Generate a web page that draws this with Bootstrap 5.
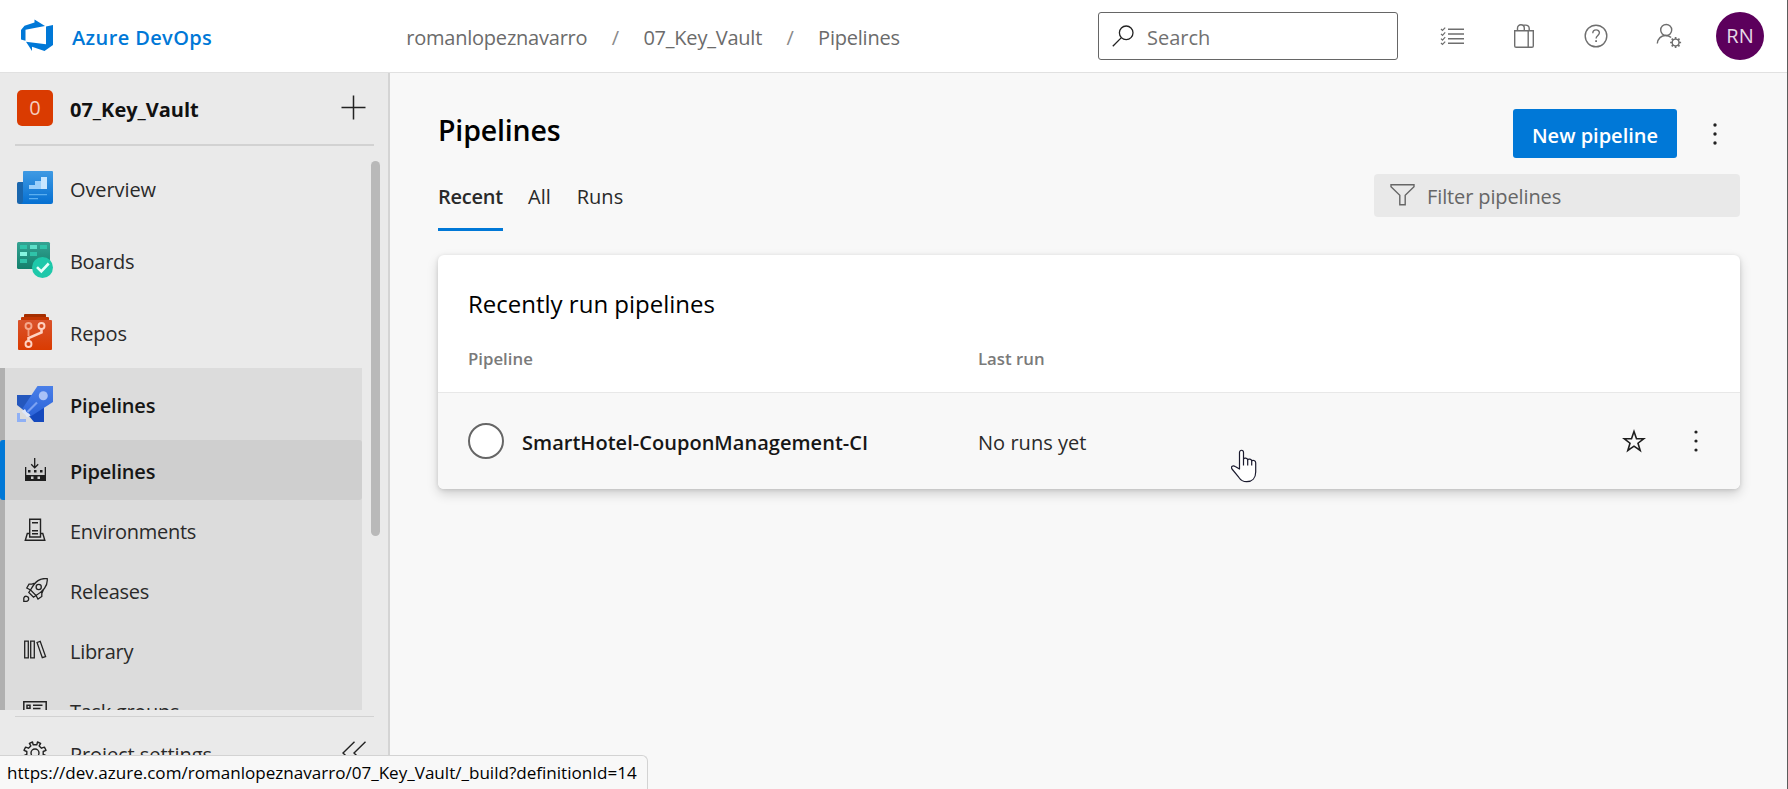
<!DOCTYPE html>
<html lang="en">
<head>
<meta charset="utf-8">
<meta name="viewport" content="width=device-width, initial-scale=1">
<title>Pipelines - Azure DevOps</title>
<link href="https://cdn.jsdelivr.net/npm/bootstrap@5.3.0/dist/css/bootstrap.min.css" rel="stylesheet">
<style>
:root{--az-blue:#0078d7}
body{font-family:"Open Sans","Noto Sans",sans-serif;font-size:20px;line-height:28px;color:#2a2a2a;background:#f8f8f8;height:100vh;overflow:hidden}
svg{display:block;flex:none}
a{color:inherit;text-decoration:none}
.shell{border-right:1px solid #5c5c5c}
.topbar{height:73px;border-bottom:1px solid #e1e1e1;background:#fff;padding:0 23px 0 20px}
.brand-name{color:var(--az-blue);font-weight:600;letter-spacing:.38px;margin-left:18px;padding-top:4px}
.crumbs{color:#6b6b6b;margin-left:194px;padding-top:4px;white-space:nowrap;letter-spacing:-.22px}
.crumb-sep{width:56px;text-align:center;color:#8a8a8a}
.searchbox{width:300px;height:48px;border:1px solid #666;border-radius:3px;color:#717171;padding:3px 12px 0 13px;margin-right:42px}
.searchbox svg{margin:-3px 13px 0 0}
.top-icons{gap:48px;margin-right:34px;color:#6e6e6e}
.avatar{width:48px;height:48px;background:#5c005c;color:#e6d9e6}
.sidebar{width:390px;background:#eaeaea;border-right:2px solid #d4d4d4}
.project-row{height:71px;padding:0 22px 2px 17px}
.project-tile{width:36px;height:36px;border-radius:5px;background:#da3b01;color:#f6cdbf}
.project-name{font-weight:700;margin-left:17px;letter-spacing:0;color:#111;padding-top:4px}
.settings-row{height:71px;padding:1px 22px 0 17px}
.rule{margin:0 14px 0 15px;background:#d2d2d2}
.nav-scroll{height:564px;padding-top:6px;overflow:hidden}
.nav-list{width:362px}
.hub{height:72px;padding-left:17px;letter-spacing:-.1px}
.hub span,.leaf span{padding-top:3px}
.hub svg{margin-right:17px}
.hub-open{background:#dcdcdc;border-left:5px solid #b0b0b0}
.hub-open .hub,.hub-open .leaf{padding-left:12px}
.leaf{height:60px}
.leaf svg{margin:0 23px 0 6px}
.leaf-on{background:#cfcfcf;border-left:5px solid var(--az-blue);border-radius:3px;margin-left:-5px}
.semi{font-weight:600;letter-spacing:-.2px;color:#161616}
.tight{letter-spacing:-.3px}
.thumb{width:9px;height:375px;border-radius:5px;background:#b9b9b9;margin:15px 8px 0 0}
.main-pane{padding:36px 47px 0 48px}
.page-title{font-size:28.5px;font-weight:600;letter-spacing:-.15px;line-height:38px;color:#000;margin:2px 0 2px}
.btn-new{width:164px;height:49px;padding:4px 0 0;border-radius:3px;background:var(--az-blue);border:0;color:#fff;font-size:20px;font-weight:600}
.kebab{width:4px;margin-left:36px;margin-right:23px}
.tabrow{height:58px;margin-top:16px}
.tab-item{margin-right:25px;height:57px;padding-top:9px}
.tab-on{border-bottom:3px solid var(--az-blue);font-weight:600;width:65px;letter-spacing:-.25px}
.tab-all{margin-right:26px}
.filterbox{width:366px;height:43px;border-radius:4px;background:#e9e9e9;color:#666;padding:2px 0 0 16px;letter-spacing:-.12px}
.filterbox svg{margin:-3px 12px 0 0}
.pipe-card{margin-top:23px;border:0;border-radius:6px;overflow:hidden;box-shadow:0 5px 12px rgba(0,0,0,.16),0 1px 4px rgba(0,0,0,.12)}
.card-heading{font-size:24px;line-height:32px;color:#000;margin:33px 0 0 30px;font-weight:400}
.col-head{font-size:16.8px;font-weight:600;color:#7a7a7a;line-height:24px;margin-top:27px;height:45px}
.cell-name{width:510px;flex:none;margin-left:30px}
.pipe-row{height:97px;background:#f8f8f8;border-top:1px solid #e8e8e8}
.pipe-name{letter-spacing:.03px;padding-top:3px}
.run-note{padding-top:3px;letter-spacing:.04px}
.run-ring{width:36px;height:36px;border:2px solid #666;border-radius:50%;background:#fff;margin-right:18px}
.row-kebab{margin:0 42px 0 48px}
.hand{left:1231px;top:449px}
.statusbar{left:0;bottom:0;width:648px;height:34px;background:#f8f8f8;border:1px solid #d3d3d3;border-left:0;border-bottom:0;border-top-right-radius:6px;color:#000;font-size:17.07px;line-height:34px;padding-left:7px;white-space:nowrap}
</style>
</head>
<body>
<div class="shell d-flex flex-column vh-100">
  <header class="topbar d-flex align-items-center flex-shrink-0">
    <svg width="34" height="34" viewBox="0 0 34 34" fill="#0078d7"><path d="M1 11 L4.5 6.8 L14.5 3.5 V0.5 L25 7 L5.5 10.8 V21.8 L1 20.5Z"/><path d="M26 7.5 L33 6 V26 L24.5 32 L12 27.8 V32 L6 22.8 L26 25.2Z"/></svg>
    <a href="#" class="brand-name">Azure DevOps</a>
    <nav class="crumbs d-flex">
      <span>romanlopeznavarro</span><span class="crumb-sep">/</span><span>07_Key_Vault</span><span class="crumb-sep">/</span><span>Pipelines</span>
    </nav>
    <div class="searchbox d-flex align-items-center ms-auto">
      <svg width="22" height="22" viewBox="0 0 22 22" fill="none" stroke="#222" stroke-width="1.3"><circle cx="14.2" cy="7.8" r="6.8"/><path d="M9.4 12.6 .8 21.2"/></svg>
      <span>Search</span>
    </div>
    <div class="top-icons d-flex align-items-center">
      <svg width="24" height="24" viewBox="0 0 24 24" fill="none" stroke="currentColor" stroke-width="1.5"><path d="M8 5.2h16M8 10h16M8 14.8h16M8 19.2h16"/><path stroke-width="1.2" d="M1 5l1.5 1.5L5.2 3.6M1 9.8l1.5 1.5 2.7-2.9M1 14.6l1.5 1.5 2.7-2.900M1 19l1.5 1.5 2.7-2.9"/></svg>
      <svg width="24" height="24" viewBox="0 0 24 24" fill="none" stroke="currentColor" stroke-width="1.4"><path d="M2.700 6.700h18.600v15.200a1.400 1.400 0 0 1-1.400 1.400H4.100a1.400 1.400 0 0 1-1.400-1.400zM16.200 6.700v16.600M5.500 6.700V4.200a3.400 3.400 0 0 1 6.800 0v2.500M9.500 1.100h4.300a3.400 3.400 0 0 1 3.400 3.400v2.200"/></svg>
      <svg width="24" height="24" viewBox="0 0 24 24" fill="none" stroke="currentColor" stroke-width="1.4"><circle cx="12" cy="12" r="10.8"/><path d="M8.800 9.200c0-4.600 6.600-4.200 6.600-.4 0 2.500-3.300 2.800-3.300 5.600"/><path stroke-width="1.8" d="M12.100 16.200v1.900"/></svg>
      <svg width="26" height="26" viewBox="0 0 26 26" fill="none" stroke="currentColor" stroke-width="1.4"><circle cx="10.200" cy="7" r="5.500"/><path d="M1.300 20.500c.4-5 4-8 8.300-8 2.400 0 4.200.8 5.500 2"/><circle cx="19.600" cy="19.500" r="3.400"/><path stroke-width="1.700" d="M19.600 14v2.100M19.600 22.900V25M14.100 19.500h2.100M23 19.500h2.100M15.700 15.600l1.500 1.500M22 21.900l1.500 1.500M23.500 15.600 22 17.100M17.200 21.900l-1.500 1.500"/></svg>
    </div>
    <div class="avatar rounded-circle d-flex align-items-center justify-content-center">RN</div>
  </header>

  <div class="d-flex flex-grow-1 overflow-hidden">
    <aside class="sidebar flex-shrink-0">
      <div class="project-row d-flex align-items-center">
        <div class="project-tile d-flex align-items-center justify-content-center">0</div>
        <span class="project-name">07_Key_Vault</span>
        <svg class="ms-auto" width="25" height="25" viewBox="0 0 25 25" stroke="#222" stroke-width="1.5"><path d="M12.500 .5v24M.5 12.500h24"/></svg>
      </div>
      <div class="rule" style="height:2px"></div>
      <div class="d-flex justify-content-between">
        <nav class="nav-scroll">
          <div class="nav-list">
            <a href="#" class="hub d-flex align-items-center">
              <svg width="36" height="36" viewBox="0 0 36 36"><defs><linearGradient id="ov" x1="0" y1="0" x2="0" y2="1"><stop stop-color="#3f9ae3"/><stop offset="1" stop-color="#0670d2"/></linearGradient></defs><path fill="#1a66ad" d="M1.500 12H10v22H2.500Q0 34 0 31.500V13.500Q0 12 1.500 12z"/><path fill="url(#ov)" d="M7 1h28a1 1 0 0 1 1 1v30a2 2 0 0 1-2 2H4q2-1 2-3V2a1 1 0 0 1 1-1z"/><path fill="#9bd0fb" d="M12 15h6v-4h6V7h6v12H12z"/><path fill="#c9e7ff" d="M24 7h6v12h-6z"/><path fill="#5aaef0" d="M12 24h18v1.300H12zM12 28h9v1.300h-9z"/></svg>
              <span>Overview</span>
            </a>
            <a href="#" class="hub d-flex align-items-center">
              <svg width="36" height="36" viewBox="0 0 36 36"><defs><linearGradient id="bo" x1="0" y1="0" x2="0" y2="1"><stop stop-color="#34a393"/><stop offset="1" stop-color="#13806c"/></linearGradient></defs><rect width="33" height="27" rx="1.500" fill="url(#bo)"/><path fill="#2fc3a9" d="M3 3h7v4H3zM23 3h7v4h-7zM13 10h7v4h-7zM3 17h7v4H3z"/><path fill="#5de0c9" d="M13 3h7v4h-7z"/><path fill="#86f5e0" d="M3 10h7v4H3z"/><circle cx="25.500" cy="25.500" r="10.500" fill="#1ec8aa"/><path fill="none" stroke="#e6fffa" stroke-width="2.600" d="M20 25.200l4.300 4.300 7.400-8"/></svg>
              <span class="tight">Boards</span>
            </a>
            <a href="#" class="hub d-flex align-items-center">
              <svg width="36" height="36" viewBox="0 0 36 36"><defs><linearGradient id="re" x1="0" y1="0" x2="0" y2="1"><stop stop-color="#d9532c"/><stop offset="1" stop-color="#da3b01"/></linearGradient></defs><path fill="#a52e00" d="M8 0h20a1 1 0 0 1 1 1v3H7V1a1 1 0 0 1 1-1z"/><path fill="#c33602" d="M5 3h26a1 1 0 0 1 1 1v4H4V4a1 1 0 0 1 1-1z"/><path fill="url(#re)" d="M2 6h32a1 1 0 0 1 1 1v28a1 1 0 0 1-1 1H2a1 1 0 0 1-1-1V7a1 1 0 0 1 1-1z"/><g fill="none" stroke="#ffd2c2" stroke-width="1.900"><path stroke="#f09a7c" d="M11.500 15v7"/><circle cx="11.500" cy="12" r="3" stroke="#f5a78c"/><path stroke-width="2.600" d="M11.500 26.500v-2.500L24.500 18.500v-3"/><circle cx="24.500" cy="12" r="3"/><circle cx="11.500" cy="30" r="3"/></g></svg>
              <span>Repos</span>
            </a>
            <div class="hub-open">
              <a href="#" class="hub d-flex align-items-center">
                <svg width="36" height="36" viewBox="0 0 36 36"><defs><linearGradient id="pi" x1="0" y1="0" x2="0" y2="1"><stop stop-color="#4a7fe8"/><stop offset="1" stop-color="#2b63d9"/></linearGradient></defs><path fill="#2457bd" d="M0 9h16L7 24.500 0 19z"/><path fill="#1549bd" d="M27 21v15H17l-5-6z"/><path fill="url(#pi)" d="M20.500 0H36v16L13.500 30.500 5.500 22.500z"/><circle cx="26.300" cy="9.700" r="4.500" fill="#a9c2f7"/><path stroke="#7da2f2" stroke-width="2.200" d="M20 16.500 10.500 26"/><path fill="#dfe7f8" d="M4.500 25.500l3.500-2.500 1.500 3 3 2 1 1.500-3.500 2-2-3z"/><path fill="#8fb0f5" d="M0 27h3v6h6v3H0z"/></svg>
                <span class="semi">Pipelines</span>
              </a>
              <a href="#" class="leaf leaf-on d-flex align-items-center">
                <svg width="24" height="24" viewBox="0 0 24 24" fill="#1e1e1e"><path d="M2 9h1.300v8h18.400V9H23v14H2z"/><path fill="#cfcfcf" d="M8 18.500h2.500v2.500H8zM14.500 18.500H17v2.500h-2.500z"/><path d="M5 12h2.500v2.500H5zM11 12h2.500v2.500H11zM17 12h2.500v2.500H17z"/><path fill="none" stroke="#1e1e1e" stroke-width="1.300" d="M11.700 0v9.500M8.200 6.300l3.500 3.500 3.500-3.500"/></svg>
                <span class="semi">Pipelines</span>
              </a>
              <a href="#" class="leaf d-flex align-items-center">
                <svg width="24" height="24" viewBox="0 0 24 24" fill="none" stroke="#222" stroke-width="1.400"><path d="M6.700 19V1.200h10.800V19zM9 4.700h6M9 12.800h6M9 15.800h6M6.700 15.500H4.300L2.300 22.300h19.500l-2-6.800h-2.300"/></svg>
                <span class="tight">Environments</span>
              </a>
              <a href="#" class="leaf d-flex align-items-center">
                <svg width="26" height="24" viewBox="0 0 26 24" fill="none" stroke="#222" stroke-width="1.300" style="margin-right:21px"><path d="M24.200.700C17-.200 12.500 3 7.500 12l5.500 5.500c8.500-5 12-10 11.200-16.800zM13 4.500 9 6.200H6L3.800 10l3.700 2M20.500 11.500l-1.700 4v3L15 21l-2-3.500"/><circle cx="15.700" cy="9" r="2.600"/><path d="M7.500 12 5.800 14.500l4.700 4.700 2.500-1.700M.800 23.300V20a2.500 2.500 0 1 1 2.500 3.300z"/></svg>
                <span class="tight">Releases</span>
              </a>
              <a href="#" class="leaf d-flex align-items-center">
                <svg width="24" height="24" viewBox="0 0 24 24" fill="none" stroke="#222" stroke-width="1.300"><path d="M1.700 3.200h3.600v16.600H1.700zM7.700 3.200h3.600v16.600H7.700zM14 4.500l3.200-1.200L22.600 18.500l-3.300 1.200z"/></svg>
                <span class="tight">Library</span>
              </a>
              <a href="#" class="leaf d-flex align-items-center">
                <svg width="24" height="24" viewBox="0 0 24 24" fill="none" stroke="#222" stroke-width="1.500"><path d="M.800 3.700h22.400v17H.800zM4 7.200h3v3H4zM10 7.200h9.500M10 10.500h7.500M4 14.500h3v3H4zM10 14.500h9.500"/></svg>
                <span class="tight">Task groups</span>
              </a>
            </div>
          </div>
        </nav>
        <div class="thumb"></div>
      </div>
      <div class="rule" style="height:1px;margin-top:6px"></div>
      <div class="settings-row d-flex align-items-center">
        <svg width="24" height="24" viewBox="0 0 24 24" fill="none" stroke="#222" stroke-width="1.400" style="margin:0 23px 0 6px"><circle cx="12" cy="12" r="4"/><path stroke-linejoin="round" d="M10.200 3.800 9.500 1 6.400 2.300l1.400 2.600-2.300 2.300-2.900-1.100L1 9.300l2.800 1.200v3L1 14.700l1.600 3.200 2.900-1.100 2.300 2.300-1.400 2.600L9.500 23l.700-2.800h3.600l.700 2.800 3.100-1.300-1.400-2.600 2.300-2.300 2.900 1.100 1.600-3.200-2.800-1.200v-3L23 9.300l-1.600-3.200-2.900 1.100-2.300-2.300 1.400-2.600L14.500 1l-.700 2.800z"/></svg>
        <span style="padding-top:3px;letter-spacing:-.08px">Project settings</span>
        <svg class="ms-auto" width="24" height="24" viewBox="0 0 24 24" fill="none" stroke="#222" stroke-width="1.400"><path d="M12.500.700 1 12l11.500 11.300M23.500.700 12 12l11.500 11.300"/></svg>
      </div>
    </aside>

    <main class="main-pane flex-grow-1">
      <div class="d-flex">
        <h1 class="page-title">Pipelines</h1>
        <button class="btn btn-new ms-auto">New pipeline</button>
        <svg class="kebab" width="4" height="49" viewBox="0 0 4 49" fill="#222"><circle cx="2" cy="16" r="1.700"/><circle cx="2" cy="25" r="1.700"/><circle cx="2" cy="34" r="1.700"/></svg>
      </div>
      <div class="tabrow d-flex">
        <a href="#" class="tab-item tab-on">Recent</a>
        <a href="#" class="tab-item tab-all">All</a>
        <a href="#" class="tab-item">Runs</a>
        <div class="filterbox d-flex align-items-center ms-auto">
          <svg width="25" height="24" viewBox="0 0 25 24" fill="none" stroke="#666" stroke-width="1.400"><path d="M1 1.800h23v2l-8.800 8.400v9.600H9.800v-9.600L1 3.800z"/></svg>
          <span>Filter pipelines</span>
        </div>
      </div>
      <section class="card pipe-card">
        <h2 class="card-heading">Recently run pipelines</h2>
        <div class="col-head d-flex">
          <span class="cell-name">Pipeline</span><span>Last run</span>
        </div>
        <div class="pipe-row d-flex align-items-center">
          <div class="cell-name d-flex align-items-center">
            <span class="run-ring flex-shrink-0"></span>
            <a href="#" class="semi pipe-name">SmartHotel-CouponManagement-CI</a>
          </div>
          <span class="run-note">No runs yet</span>
          <svg class="ms-auto" width="24" height="24" viewBox="0 0 24 24" fill="none" stroke="#1e1e1e" stroke-width="1.600"><path d="M12 2.500l2.500 7.200h7.400l-5.900 4.500 2.200 7.300L12 17.200l-6.200 4.300L8 14.200 2.100 9.700h7.400z"/></svg>
          <svg class="row-kebab" width="4" height="26" viewBox="0 0 4 26" fill="#222"><circle cx="2" cy="4" r="1.600"/><circle cx="2" cy="13" r="1.600"/><circle cx="2" cy="22" r="1.600"/></svg>
        </div>
      </section>
    </main>
  </div>
</div>

<svg class="hand position-absolute" width="26" height="34" viewBox="0 0 26 34" fill="#fff" stroke="#1a1a2e" stroke-width="1.200" stroke-linejoin="round"><path d="M8.500 20V3.500c0-3 4-3 4 0V10c.500-1.500 4-1.200 4.200.800.800-1.300 3.800-.800 4 1 1-1 4-.500 4 2V23c0 6-3.500 9.700-9 9.700-4 0-6.200-1.700-8-4.500L1 20c-1.500-2.500 1-4 3.200-2.500z"/><path fill="none" d="M12.500 10v6.500M16.700 11v5.500M20.700 12v4.500"/></svg>
<div class="statusbar position-absolute">https://dev.azure.com/romanlopeznavarro/07_Key_Vault/_build?definitionId=14</div>
<script src="https://cdn.jsdelivr.net/npm/bootstrap@5.3.0/dist/js/bootstrap.bundle.min.js"></script>
</body>
</html>
